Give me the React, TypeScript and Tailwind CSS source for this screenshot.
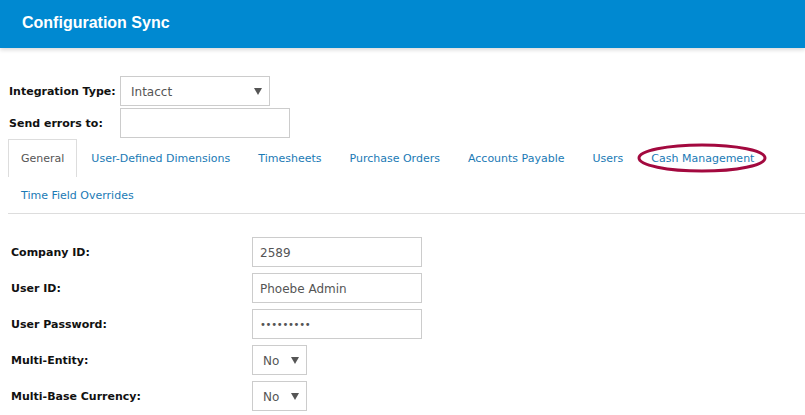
import React from "react";

const tabs = [
  "General",
  "User-Defined Dimensions",
  "Timesheets",
  "Purchase Orders",
  "Accounts Payable",
  "Users",
  "Cash Management",
];

const Caret = () => (
  <svg width="8" height="7" viewBox="0 0 8 7" className="shrink-0">
    <path d="M0 0 L8 0 L4 7 Z" fill="#555" />
  </svg>
);

const TextField = ({ value, secret }: { value: string; secret?: boolean }) => (
  <div
    className={
      secret
        ? "w-[170px] h-[30px] border border-[#cccccc] flex items-center px-[7px] text-[10px] text-[#555] tracking-[-0.3px]"
        : "w-[170px] h-[30px] border border-[#cccccc] flex items-center px-[7px] text-[12px] text-[#555]"
    }
  >
    <span className="pt-[1px]">{value}</span>
  </div>
);

const SmallSelect = ({ value }: { value: string }) => (
  <div className="w-[55px] h-[30px] border border-[#cccccc] flex items-center justify-between pl-[10px] pr-[7px] text-[12px] text-[#555]">
    <span className="pt-[2px]">{value}</span>
    <Caret />
  </div>
);

const App = () => {
  const fields: { label: string; kind: "text" | "select" | "secret"; value: string }[] = [
    { label: "Company ID:", kind: "text", value: "2589" },
    { label: "User ID:", kind: "text", value: "Phoebe Admin" },
    { label: "User Password:", kind: "secret", value: "•••••••••" },
    { label: "Multi-Entity:", kind: "select", value: "No" },
    { label: "Multi-Base Currency:", kind: "select", value: "No" },
  ];

  return (
    <div
      className="w-[805px] h-[415px] overflow-hidden bg-white"
      style={{ fontFamily: '"DejaVu Sans", Verdana, sans-serif' }}
    >
      {/* Header */}
      <div className="h-[48px] bg-[#0089d1] flex items-center pl-[22px] shadow-[0_2px_4px_rgba(0,0,0,0.15)]">
        <h1 className="text-[16px] font-bold text-white font-['Liberation_Sans',Arial,sans-serif] -mt-[3px]">
          Configuration Sync
        </h1>
      </div>

      <div className="pl-[8px] pt-[28px]">
        {/* Top settings */}
        <div className="flex items-center h-[30px]">
          <div className="w-[112px] pl-[1px] pt-[3px] text-[11px] font-bold text-[#111]">
            Integration Type:
          </div>
          <div className="w-[150px] h-[30px] border border-[#cccccc] flex items-center justify-between pl-[10px] pr-[7px] text-[12px] text-[#555]">
            <span className="pt-[2px]">Intacct</span>
            <Caret />
          </div>
        </div>
        <div className="flex items-center h-[30px] mt-[2px]">
          <div className="w-[112px] pl-[1px] pt-[3px] text-[11px] font-bold text-[#111]">
            Send errors to:
          </div>
          <div className="w-[170px] h-[30px] border border-[#cccccc]" />
        </div>

        {/* Tabs */}
        <div className="border-b border-[#dddddd] flex flex-wrap text-[11px] text-[#1a7ab5] mt-[1px]">
          {tabs.map((t, i) => (
            <div
              key={t}
              className={
                i === 0
                  ? "relative h-[38px] px-[12px] flex items-center border border-b-0 border-[#dddddd] text-[#555]"
                  : "relative h-[38px] px-[13px] mx-[1px] flex items-center"
              }
            >
              <span className="pt-[2px]">{t}</span>
              {t === "Cash Management" && (
                <svg
                  className="absolute left-[-1px] top-[4px] pointer-events-none"
                  width="130"
                  height="30"
                  viewBox="0 0 130 30"
                >
                  <ellipse cx="65" cy="15" rx="63" ry="13" fill="none" stroke="#a3093f" strokeWidth="3" />
                </svg>
              )}
            </div>
          ))}
          <div className="h-[36px] px-[13px] flex items-center">
            <span className="pt-[2px]">Time Field Overrides</span>
          </div>
        </div>

        {/* Form */}
        <div className="pt-[23px] flex flex-col gap-[6px]">
          {fields.map((f) => (
            <div key={f.label} className="flex items-center h-[30px]">
              <div className="w-[244px] pl-[3px] pt-[3px] text-[11px] font-bold text-[#111]">
                {f.label}
              </div>
              {f.kind === "select" ? (
                <SmallSelect value={f.value} />
              ) : (
                <TextField value={f.value} secret={f.kind === "secret"} />
              )}
            </div>
          ))}
        </div>
      </div>
    </div>
  );
};

export default App;
